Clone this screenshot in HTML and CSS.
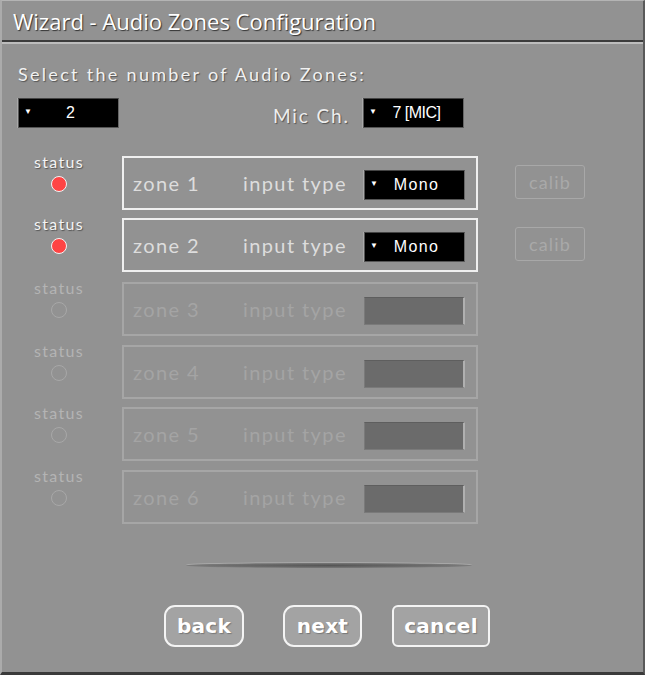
FILE: index.html
```html
<!DOCTYPE html>
<html lang="en">
<head>
    <meta charset="UTF-8">
    <title>Wizard - Audio Zones Configuration</title>
    <link rel="stylesheet" href="styles.css">
</head>
<body>

    <div class="window">
        <!-- Title bar -->
        <div class="title-bar">Wizard - Audio Zones Configuration</div>

        <div class="content">
            <div class="prompt">Select the number of Audio Zones:</div>

            <div class="top-row">
                <div class="select"><span class="arrow">&#9660;</span><span class="value">2</span></div>
                <div class="mic">
                    <span class="mic-label">Mic Ch.</span>
                    <div class="select"><span class="arrow">&#9660;</span><span class="value narrow">7 [MIC]</span></div>
                </div>
            </div>

            <!-- Zones -->
            <div class="zones">
                <div class="zone-row">
                    <div class="status"><span>status</span><i class="led on"></i></div>
                    <div class="zone-box">
                        <span class="zone-name">zone 1</span>
                        <span class="zone-type">input type</span>
                        <div class="select small"><span class="arrow">&#9660;</span><span class="value">Mono</span></div>
                    </div>
                    <div class="calib">calib</div>
                </div>
                <div class="zone-row">
                    <div class="status"><span>status</span><i class="led on"></i></div>
                    <div class="zone-box">
                        <span class="zone-name">zone 2</span>
                        <span class="zone-type">input type</span>
                        <div class="select small"><span class="arrow">&#9660;</span><span class="value">Mono</span></div>
                    </div>
                    <div class="calib">calib</div>
                </div>
                <div class="zone-row off">
                    <div class="status"><span>status</span><i class="led"></i></div>
                    <div class="zone-box">
                        <span class="zone-name">zone 3</span>
                        <span class="zone-type">input type</span>
                        <div class="select small empty"></div>
                    </div>
                </div>
                <div class="zone-row off">
                    <div class="status"><span>status</span><i class="led"></i></div>
                    <div class="zone-box">
                        <span class="zone-name">zone 4</span>
                        <span class="zone-type">input type</span>
                        <div class="select small empty"></div>
                    </div>
                </div>
                <div class="zone-row off">
                    <div class="status"><span>status</span><i class="led"></i></div>
                    <div class="zone-box">
                        <span class="zone-name">zone 5</span>
                        <span class="zone-type">input type</span>
                        <div class="select small empty"></div>
                    </div>
                </div>
                <div class="zone-row off">
                    <div class="status"><span>status</span><i class="led"></i></div>
                    <div class="zone-box">
                        <span class="zone-name">zone 6</span>
                        <span class="zone-type">input type</span>
                        <div class="select small empty"></div>
                    </div>
                </div>
            </div>

            <div class="divider"></div>

            <div class="buttons">
                <div class="btn back">back</div>
                <div class="btn next">next</div>
                <div class="btn cancel">cancel</div>
            </div>
        </div>
    </div>

</body>
</html>
```

FILE: styles.css
```css
body {
    margin: 0;
    background-color: #929292;
    font-family: 'Lato', sans-serif;
}

.window {
    width: 645px;
    height: 675px;
    box-sizing: border-box;
    background-color: #929292;
    border-top: 1px solid #b4b4b4;
    border-left: 2px solid #ababab;
    border-right: 2px solid #5a5a5a;
    border-bottom: 3px solid #3a3a3a;
    display: flex;
    flex-direction: column;
}

.title-bar {
    height: 41px;
    box-sizing: border-box;
    padding: 5px 0 0 11px;
    font-family: 'Open Sans', sans-serif;
    font-size: 22px;
    color: #ffffff;
    text-shadow: 1px 1px 1px #333;
    border-bottom: 2px solid #3c3c3c;
    box-shadow: 0 2px 0 #bdbdbd;
}

.content {
    flex: 1;
    padding: 21px 0 0 16px;
}

.prompt {
    font-size: 18px;
    color: #f2f2f2;
    letter-spacing: 2.3px;
    text-shadow: 1px 1px 1px #555;
    height: 23px;
}

.top-row {
    display: flex;
    align-items: center;
    margin-top: 12px;
    width: 446px;
    justify-content: space-between;
}

.mic {
    display: flex;
    align-items: center;
}

.mic-label {
    font-size: 19px;
    color: #eeeeee;
    letter-spacing: 1.9px;
    text-shadow: 1px 1px 1px #555;
    margin-right: 13px;
    padding-top: 4px;
}

.select {
    width: 101px;
    height: 30px;
    box-sizing: border-box;
    background-color: #000;
    border: 1px solid #555;
    border-top-color: #444;
    border-right-color: #666;
    box-shadow: -1px 0 0 #a9a9a9;
    display: flex;
    align-items: center;
    font-family: 'Liberation Sans', Arial, sans-serif;
    color: #ffffff;
    font-size: 16px;
}

.select .arrow {
    font-size: 8px;
    width: 18px;
    padding-left: 5px;
    box-sizing: border-box;
    margin-bottom: 3px;
}

.select .value {
    flex: 1;
    text-align: center;
    padding-right: 14px;
}

.select .value.narrow {
    letter-spacing: -0.5px;
    padding-right: 12px;
}

.zones {
    margin-top: 28px;
    margin-left: -18px;
}

.zone-row {
    display: flex;
    align-items: flex-start;
    height: 54px;
    margin-bottom: 8.5px;
}

.zone-row:first-child {
    margin-bottom: 8px;
}

.zone-row:nth-child(2) {
    margin-bottom: 10px;
}

.status {
    width: 118px;
    margin-right: 4px;
    display: flex;
    flex-direction: column;
    align-items: center;
    margin-top: -4px;
    font-size: 16px;
    color: #f4f4f4;
    letter-spacing: 1.3px;
    text-shadow: 1px 1px 1px #555;
}

.led {
    display: block;
    width: 14px;
    height: 14px;
    border-radius: 50%;
    border: 1.5px solid #c8c8c8;
    margin-top: 5px;
}

.led.on {
    background-color: #ff4444;
    border-color: #f4f4f4;
}

.zone-box {
    width: 356px;
    height: 54px;
    box-sizing: border-box;
    border: 2px solid #f0f0f0;
    display: flex;
    align-items: center;
    padding: 0 11px 0 9px;
    font-size: 20px;
    color: #dddddd;
    letter-spacing: 1.4px;
}

.zone-name {
    width: 110px;
}

.zone-type {
    flex: 1;
}

.select.small {
    margin-top: 4px;
    width: 101px;
}

.calib {
    margin-left: 37px;
    margin-top: 9px;
    width: 70px;
    height: 34px;
    box-sizing: border-box;
    border: 1px solid #a8a8a8;
    border-radius: 3px;
    color: #a9a9a9;
    font-size: 18px;
    letter-spacing: 1.2px;
    display: flex;
    align-items: center;
    justify-content: center;
}

/* disabled rows */
.zone-row.off .status {
    color: #b4b4b4;
    text-shadow: none;
}

.zone-row.off .zone-box {
    border-color: #a6a6a6;
    color: #a4a4a4;
}

.zone-row.off .led {
    border-color: #a8a8a8;
}

.select.empty {
    background-color: #6b6b6b;
    border-color: #7a7a7a;
    border-top-color: #5e5e5e;
    border-right: 2px solid #b0b0b0;
    box-shadow: none;
    height: 28px;
}

.divider {
    margin: 39px 0 0 168px;
    width: 286px;
    height: 5px;
    border-radius: 50%;
    background: radial-gradient(ellipse at center, #555 0%, #6d6d6d 50%, rgba(146,146,146,0) 100%);
    box-shadow: 0 -1px 0 rgba(200,200,200,0.4);
}

.buttons {
    display: flex;
    margin: 37px 0 0 146px;
}

.btn {
    height: 42px;
    box-sizing: border-box;
    border: 2px solid #f4f4f4;
    border-radius: 11px;
    background-color: #a3a3a3;
    color: #ffffff;
    font-family: 'DejaVu Sans', sans-serif;
    font-weight: bold;
    font-size: 20px;
    letter-spacing: 0.3px;
    display: flex;
    align-items: center;
    justify-content: center;
    text-shadow: 1px 1px 1px #777;
}

.btn.back {
    width: 80px;
}

.btn.next {
    width: 79px;
    margin-left: 39px;
}

.btn.cancel {
    width: 98px;
    margin-left: 30px;
    border-radius: 6px;
}
```
